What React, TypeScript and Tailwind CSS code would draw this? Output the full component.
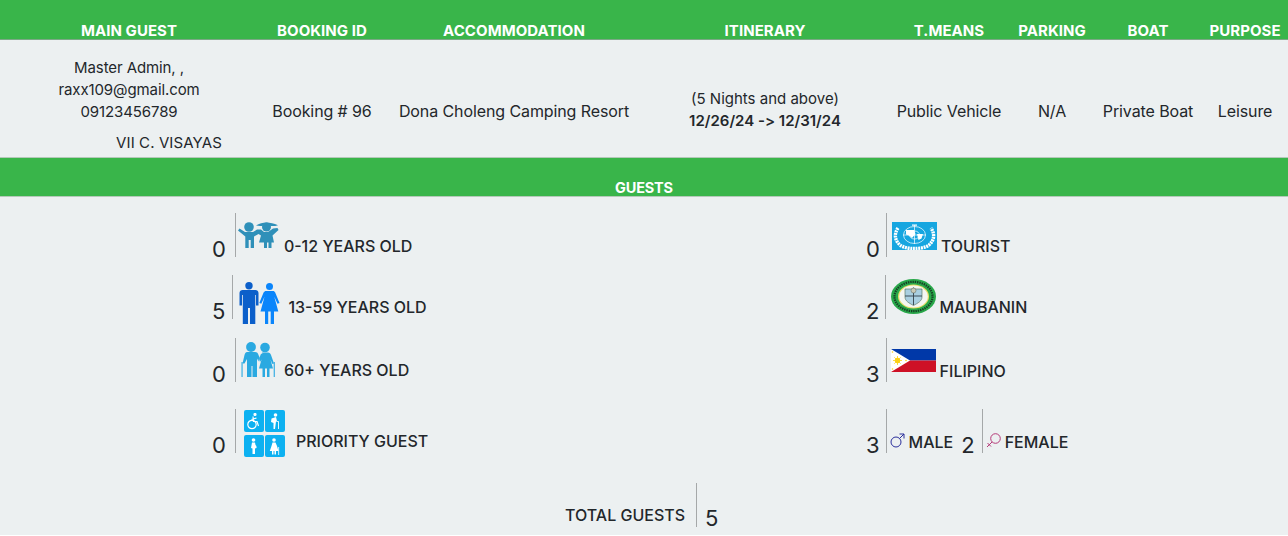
import React from "react";

const headers = [
  { label: "MAIN GUEST", w: "w-[258px]" },
  { label: "BOOKING ID", w: "w-[128px]" },
  { label: "ACCOMMODATION", w: "w-[256px]" },
  { label: "ITINERARY", w: "w-[246px]" },
  { label: "T.MEANS", w: "w-[122px]" },
  { label: "PARKING", w: "w-[84px]" },
  { label: "BOAT", w: "w-[108px]" },
  { label: "PURPOSE", w: "w-[86px]" },
];

function KidsIcon() {
  return (
    <svg width="41" height="27" viewBox="0 0 41 27" fill="#2f90b9">
      <circle cx="11" cy="5" r="4.800" />
      <path d="M0 8.500 1.500 6.500 7 10h8l4-2.500L23 7.500l3 2.500h4l5-3.500L39.500 6l1 2-6 5.500 1.500 7h-2.500V26h-3v-5.500h-1.500V26h-3v-5.500H21l2-7-2.500-1.500L16 14.500V26h-3.300v-8h-2v8H7.300V14.500z" />
      <circle cx="28.500" cy="5" r="4.500" />
      <path d="M18 3.500C21 1.500 25 .5 28.500.5S36 1.500 40 3.200c-3 1-6 1-8 .6h-7c-2.500.3-5 .2-7-.3z" />
    </svg>
  );
}

function AdultsIcon() {
  return (
    <svg width="41" height="43" viewBox="0 0 41 43">
      <circle cx="10" cy="3.800" r="3.700" fill="#0b5fca" />
      <path d="M3.500 8h13c1.500 0 3 1.200 3 3v12.500h-2.500V13h-.7v29H11v-16H9v16H3.800V13H3v10.500H.5V11c0-1.800 1.500-3 3-3z" fill="#0b5fca" />
      <circle cx="30.500" cy="4.500" r="3.500" fill="#0a85fb" />
      <path d="M27 9h7c1 0 1.800.6 2.200 1.500L40.500 21l-2 .8-3.200-7 4 14.700H35V42h-3.300V29.500h-2.500V42H26V29.500h-4.500l4-14.700-3.200 7-2-.8 4.300-10.500C25.200 9.600 26 9 27 9z" fill="#0a85fb" />
    </svg>
  );
}

function ElderIcon() {
  return (
    <svg width="35" height="37" viewBox="0 0 35 37" fill="#2aa9e1">
      <circle cx="10" cy="5" r="4.900" />
      <circle cx="24" cy="5.500" r="4.800" />
      <path d="M6 10h8c2 0 3 1 3.500 3l1.500 3.500h-1l-.5 3-1.500-3V35h-4.500V24h-1V35H6V17l-2.500 4.500H1.500l2-8.500C4 11 5 10 6 10z" />
      <path d="M21 10.500h6c1.500 0 2.500 1 3 2.500l3 8.500-1.600.5-2-4.500 2.600 9h-3.500v8.500h-2.500v-8.500h-2v8.500h-2.500v-8.500H18l2.500-9-1.500 2.500-1-3 1.500-4c.3-1 1-1.500 2-1.500z" />
      <rect x="0.500" y="20" width="1.100" height="15" />
      <rect x="32.700" y="20" width="1.100" height="15" />
    </svg>
  );
}

function PriorityIcon() {
  const tile = "w-[20px] h-[22px] rounded-[2px] bg-[#0db1f1] flex items-center justify-center";
  return (
    <div className="grid grid-cols-[20px_20px] gap-x-[1px] gap-y-[3px]">
      <div className={tile}>
        <svg width="13" height="17" viewBox="0 0 13 17" fill="none" stroke="#fff" strokeWidth="1.200">
          <circle cx="5" cy="11.500" r="4.200" />
          <path d="M6 3.500 6.500 8.500H10l1.500 4.500M4.500 6.500l5-1.500" />
          <circle cx="8" cy="1.500" r="1" fill="#fff" />
        </svg>
      </div>
      <div className={tile}>
        <svg width="11" height="16" viewBox="0 0 11 16" fill="#fff">
          <circle cx="6.500" cy="2" r="1.800" />
          <path d="M2.500 5.500 7 4l1 4h2L9.500 9 7 8.500 6 16H4.500V10L2 9z" />
          <rect x="9" y="9" width="0.900" height="7" />
        </svg>
      </div>
      <div className={tile}>
        <svg width="9" height="16" viewBox="0 0 9 16" fill="#fff">
          <circle cx="4.500" cy="2" r="1.800" />
          <path d="M3 4.500h3l.5 2.500c1 .8 1.200 2 1 3L6 10.500V16H3.500v-5.500L2 10z" />
        </svg>
      </div>
      <div className={tile}>
        <svg width="11" height="17" viewBox="0 0 11 17" fill="#fff">
          <circle cx="5" cy="2" r="1.800" />
          <path d="M3.500 4.500h3L8 8l1.500 5H7v3.500H5.500V13h-1v3.500H3V13H.8L2.500 8z" />
          <rect x="9.300" y="9" width="0.800" height="8" />
        </svg>
      </div>
    </div>
  );
}

function UnFlag() {
  return (
    <svg width="45" height="28" viewBox="0 0 45 28">
      <rect width="45" height="28" fill="#16a6e0" />
      <path d="M6 6c-4 6-3.500 12 2 17 4 3 10 3.500 14.500 3.500S33 26 37 23c5.500-5 6-11 2-17" fill="none" stroke="#fff" strokeWidth="3.400" strokeDasharray="2 0.700" />
      <g fill="none" stroke="#fff" strokeWidth="0.700">
        <ellipse cx="22.500" cy="13" rx="5" ry="4" />
        <ellipse cx="22.500" cy="13" rx="11" ry="8.500" />
        <path d="M22.500 3v19M11 13h23" />
      </g>
      <path d="M14 8h8l1.500 4-3.500 4-3-2.500-3-1zM25 12h6l-1.500 4.500-3 1.500z" fill="#fff" />
      <path d="M20 2.500h5v1.200h-5z" fill="#fff" />
    </svg>
  );
}

function SealIcon() {
  return (
    <svg width="45" height="35" viewBox="0 0 45 35">
      <ellipse cx="22.500" cy="17.500" rx="22.500" ry="17.500" fill="#29a84a" />
      <ellipse cx="22.500" cy="17.500" rx="19" ry="14.700" fill="none" stroke="#173f24" strokeWidth="2.200" strokeDasharray="1.400 0.900" />
      <ellipse cx="22.500" cy="17.500" rx="15.500" ry="12" fill="#e9dd68" />
      <ellipse cx="22.500" cy="17.500" rx="14.300" ry="11" fill="#f4f6f2" />
      <path d="M14 10h17v8c0 4-4 6-8.500 8.500C18 24 14 22 14 18z" fill="#a9cfe0" stroke="#4c6b55" strokeWidth="0.600" />
      <path d="M22.500 8.500V26M14 17h17" stroke="#33424a" strokeWidth="0.900" />
      <circle cx="22.500" cy="11.500" r="2.500" fill="#c9c9b5" stroke="#55625a" strokeWidth="0.500" />
    </svg>
  );
}

function PhFlag() {
  return (
    <svg width="45" height="23" viewBox="0 0 45 23">
      <rect width="45" height="11.500" fill="#0038a8" />
      <rect y="11.500" width="45" height="11.500" fill="#ce1126" />
      <path d="M0 0 19 11.500 0 23z" fill="#fff" />
      <circle cx="6.500" cy="11.500" r="2.700" fill="#fcd116" />
      <path d="M6.500 7v9M2 11.500h9M3.300 8.300l6.400 6.400M9.700 8.300l-6.400 6.400" stroke="#fcd116" strokeWidth="0.800" />
      <circle cx="1.500" cy="3" r="0.800" fill="#fcd116" />
      <circle cx="1.500" cy="20" r="0.800" fill="#fcd116" />
      <circle cx="15" cy="11.500" r="0.800" fill="#fcd116" />
    </svg>
  );
}

function MaleIcon() {
  return (
    <svg width="15" height="15" viewBox="0 0 15 15" fill="none" stroke="#2a2f9c" strokeWidth="1">
      <circle cx="6" cy="9" r="5" />
      <path d="M9.500 5.500 14 1M9.500 1H14v4.500" />
    </svg>
  );
}

function FemaleIcon() {
  return (
    <svg width="15" height="15" viewBox="0 0 15 15" fill="none" stroke="#b53a78" strokeWidth="1">
      <circle cx="9.500" cy="5.500" r="4.800" />
      <path d="M6 9 1 14M1.500 10 5 13.500" />
    </svg>
  );
}

function Divider({ className = "" }: { className?: string }) {
  return <div className={`w-px h-[44px] bg-[#a5a8a9] ${className}`} />;
}

interface guestRowProps {
  count: number;
  label: string;
  icon: React.ReactNode;
  iconClass: string;
  labelClass: string;
  dividerClass: string;
}

function GuestRow({ count, label, icon, iconClass, labelClass, dividerClass }: guestRowProps) {
  return (
    <div className="flex items-start">
      <span className="text-[22px] leading-[26px] mt-[23px]">{count}</span>
      <Divider className={dividerClass} />
      <div className={iconClass}>{icon}</div>
      <span className={`text-[16px] leading-[20px] font-medium ${labelClass}`}>{label}</span>
    </div>
  );
}

export default function App() {
  return (
    <div className="w-[1288px] h-[535px] bg-[#ecf0f1] text-[#23272b] overflow-hidden font-['Inter',sans-serif]">
      <div className="flex h-[40px] bg-[#39b54a] border-b border-[#7ba886] text-white text-[15px] font-bold tracking-[0.05px]">
        {headers.map((h) => (
          <div key={h.label} className={`${h.w} pt-[21px] text-center leading-[20px]`}>
            {h.label}
          </div>
        ))}
      </div>

      <div className="flex items-center h-[117px] text-[16px] tracking-[-0.1px] text-center">
        <div className="w-[258px] h-full pt-[17px] text-[15px]">
          <div className="leading-[22px]">Master Admin, ,</div>
          <div className="leading-[22px]">raxx109@gmail.com</div>
          <div className="leading-[22px]">09123456789</div>
          <div className="leading-[22px] mt-[9px] pl-[80px] tracking-[0.1px]">VII C. VISAYAS</div>
        </div>
        <div className="w-[128px] mt-[24px]">Booking # 96</div>
        <div className="w-[256px] mt-[24px]">Dona Choleng Camping Resort</div>
        <div className="w-[246px] mt-[22px] leading-[22px] text-[15px] tracking-normal">
          <div>(5 Nights and above)</div>
          <div className="font-semibold [font-feature-settings:'calt'_0]">12/26/24 -&gt; 12/31/24</div>
        </div>
        <div className="w-[122px] mt-[24px]">Public Vehicle</div>
        <div className="w-[84px] mt-[24px]">N/A</div>
        <div className="w-[108px] mt-[24px]">Private Boat</div>
        <div className="w-[86px] mt-[24px]">Leisure</div>
      </div>

      <div className="h-[40px] bg-[#39b54a] border-y border-[#b5c9ba] text-white text-[14.500px] font-bold tracking-[-0.2px] text-center pt-[20px] leading-[20px]">
        GUESTS
      </div>

      <div className="grid grid-cols-[654px_634px] grid-rows-[62px_63px_71px_74px] pt-[16px]">
        <div className="pl-[212px]">
          <GuestRow count={0} label="0-12 YEARS OLD" icon={<KidsIcon />} iconClass="ml-[2px] mt-[9px]" labelClass="ml-[5px] mt-[23px]" dividerClass="ml-[9px]" />
        </div>
        <div className="pl-[212px]">
          <GuestRow count={0} label="TOURIST" icon={<UnFlag />} iconClass="ml-[5px] mt-[9px]" labelClass="ml-[4px] mt-[23px]" dividerClass="ml-[6px]" />
        </div>
        <div className="pl-[212px]">
          <GuestRow count={5} label="13-59 YEARS OLD" icon={<AdultsIcon />} iconClass="ml-[6px] mt-[7px]" labelClass="ml-[8px] mt-[22px]" dividerClass="ml-[7px]" />
        </div>
        <div className="pl-[212px]">
          <GuestRow count={2} label="MAUBANIN" icon={<SealIcon />} iconClass="ml-[5px] mt-[4px]" labelClass="ml-[3px] mt-[22px]" dividerClass="ml-[6px]" />
        </div>
        <div className="pl-[212px]">
          <GuestRow count={0} label="60+ YEARS OLD" icon={<ElderIcon />} iconClass="ml-[5px] mt-[4px]" labelClass="ml-[8px] mt-[22px]" dividerClass="ml-[9px]" />
        </div>
        <div className="pl-[212px]">
          <GuestRow count={3} label="FILIPINO" icon={<PhFlag />} iconClass="ml-[4px] mt-[11px]" labelClass="ml-[4px] mt-[23px]" dividerClass="ml-[6px]" />
        </div>
        <div className="pl-[212px]">
          <GuestRow count={0} label="PRIORITY GUEST" icon={<PriorityIcon />} iconClass="ml-[8px] mt-[1px]" labelClass="ml-[11px] mt-[22px]" dividerClass="ml-[9px]" />
        </div>
        <div className="pl-[212px] flex items-start">
          <GuestRow count={3} label="MALE" icon={<MaleIcon />} iconClass="ml-[3px] mt-[24px]" labelClass="ml-[4px] mt-[23px]" dividerClass="ml-[6px]" />
          <div className="ml-[8px]">
            <GuestRow count={2} label="FEMALE" icon={<FemaleIcon />} iconClass="ml-[3px] mt-[24px]" labelClass="ml-[4px] mt-[23px]" dividerClass="ml-[7px]" />
          </div>
        </div>
      </div>

      <div className="flex items-start pl-[565px]">
        <span className="text-[16px] leading-[20px] font-medium mt-[22px]">TOTAL GUESTS</span>
        <Divider className="ml-[11px] h-[42px]" />
        <span className="text-[22px] leading-[26px] ml-[8px] mt-[22px]">5</span>
      </div>
    </div>
  );
}
